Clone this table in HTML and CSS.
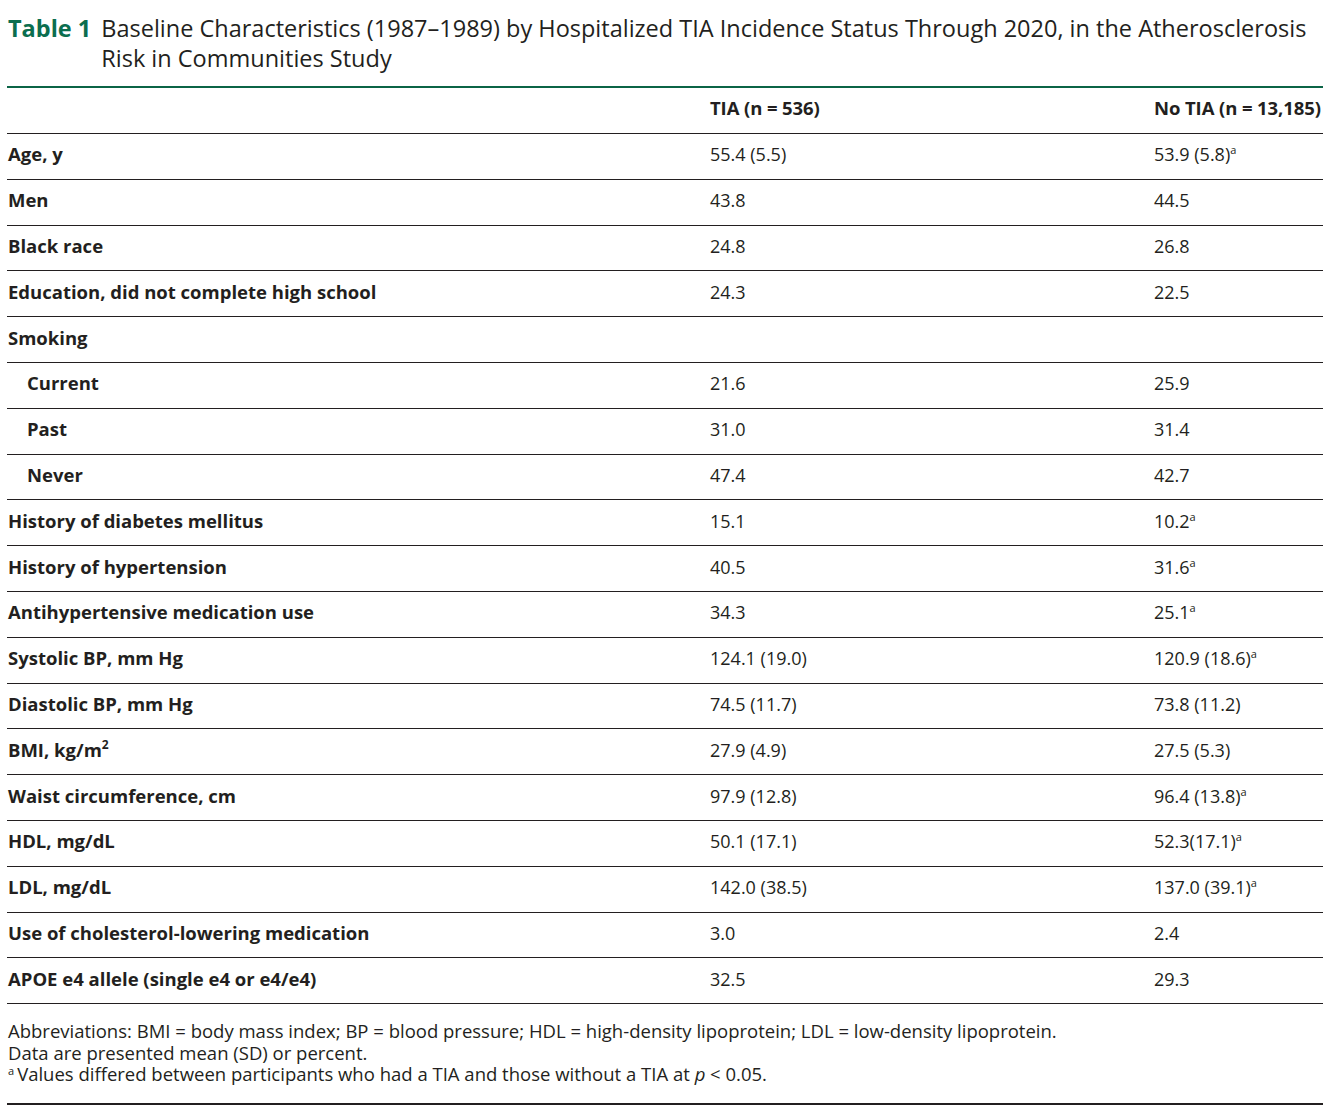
FILE: index.html
```html
<!DOCTYPE html>
<html>
<head>
<meta charset="utf-8">
<link rel="stylesheet" href="styles.css">
</head>
<body>
<div class="wrap">
  <div class="caption">
    <span class="label">Table 1</span>
    <span class="title">Baseline Characteristics (1987–1989) by Hospitalized TIA Incidence Status Through 2020, in the Atherosclerosis Risk in Communities Study</span>
  </div>
  <table class="data">
    <thead>
      <tr><th class="c1"></th><th class="c2">TIA (n = 536)</th><th class="c3">No TIA (n = 13,185)</th></tr>
    </thead>
    <tbody>
      <tr><td class="c1">Age, y</td><td class="c2">55.4 (5.5)</td><td class="c3">53.9 (5.8)<sup>a</sup></td></tr>
      <tr><td class="c1">Men</td><td class="c2">43.8</td><td class="c3">44.5</td></tr>
      <tr><td class="c1">Black race</td><td class="c2">24.8</td><td class="c3">26.8</td></tr>
      <tr><td class="c1">Education, did not complete high school</td><td class="c2">24.3</td><td class="c3">22.5</td></tr>
      <tr><td class="c1">Smoking</td><td class="c2"></td><td class="c3"></td></tr>
      <tr><td class="c1 ind">Current</td><td class="c2">21.6</td><td class="c3">25.9</td></tr>
      <tr><td class="c1 ind">Past</td><td class="c2">31.0</td><td class="c3">31.4</td></tr>
      <tr><td class="c1 ind">Never</td><td class="c2">47.4</td><td class="c3">42.7</td></tr>
      <tr><td class="c1">History of diabetes mellitus</td><td class="c2">15.1</td><td class="c3">10.2<sup>a</sup></td></tr>
      <tr><td class="c1">History of hypertension</td><td class="c2">40.5</td><td class="c3">31.6<sup>a</sup></td></tr>
      <tr><td class="c1">Antihypertensive medication use</td><td class="c2">34.3</td><td class="c3">25.1<sup>a</sup></td></tr>
      <tr><td class="c1">Systolic BP, mm Hg</td><td class="c2">124.1 (19.0)</td><td class="c3">120.9 (18.6)<sup>a</sup></td></tr>
      <tr><td class="c1">Diastolic BP, mm Hg</td><td class="c2">74.5 (11.7)</td><td class="c3">73.8 (11.2)</td></tr>
      <tr><td class="c1">BMI, kg/m<sup class="sq">2</sup></td><td class="c2">27.9 (4.9)</td><td class="c3">27.5 (5.3)</td></tr>
      <tr><td class="c1">Waist circumference, cm</td><td class="c2">97.9 (12.8)</td><td class="c3">96.4 (13.8)<sup>a</sup></td></tr>
      <tr><td class="c1">HDL, mg/dL</td><td class="c2">50.1 (17.1)</td><td class="c3">52.3(17.1)<sup>a</sup></td></tr>
      <tr><td class="c1">LDL, mg/dL</td><td class="c2">142.0 (38.5)</td><td class="c3">137.0 (39.1)<sup>a</sup></td></tr>
      <tr><td class="c1">Use of cholesterol-lowering medication</td><td class="c2">3.0</td><td class="c3">2.4</td></tr>
      <tr><td class="c1">APOE e4 allele (single e4 or e4/e4)</td><td class="c2">32.5</td><td class="c3">29.3</td></tr>
    </tbody>
  </table>
  <div class="notes">
    <p>Abbreviations: BMI = body mass index; BP = blood pressure; HDL = high-density lipoprotein; LDL = low-density lipoprotein.</p>
    <p>Data are presented mean (SD) or percent.</p>
    <p><sup class="fn">a</sup>Values differed between participants who had a TIA and those without a TIA at <i>p</i> &lt; 0.05.</p>
  </div>
</div>
</body>
</html>
```
FILE: styles.css
```css
html, body {
  margin: 0;
  padding: 0;
  background: #ffffff;
}
body {
  font-family: "Open Sans", "Noto Sans", sans-serif;
  color: #231f20;
}
.wrap {
  width: 1316px;
  margin-left: 7px;
  padding-top: 13px;
}
.caption {
  display: flex;
  gap: 10px;
  font-size: 23.5px;
  line-height: 30px;
  padding-bottom: 13px;
  border-bottom: 2px solid #0b6446;
}
.caption .label {
  color: #0b6e4f;
  font-weight: 700;
  white-space: nowrap;
  padding-left: 1px;
}
.caption .title {
  color: #231f20;
}
.data {
  width: 100%;
  table-layout: fixed;
  border-collapse: collapse;
  font-size: 18px;
}
.data th, .data td {
  text-align: left;
  padding: 0 0 4px 0;
  height: 40.8px;
  border-bottom: 1px solid #231f20;
  vertical-align: middle;
  line-height: 24px;
}
.data th {
  font-weight: 700;
  font-size: 18.5px;
  letter-spacing: -0.1px;
  padding-bottom: 6px;
  height: 39px;
  white-space: nowrap;
}
.data .c1 {
  width: 702px;
  font-weight: 700;
  font-size: 18.5px;
  padding-left: 1px;
}
.data .c1.ind {
  padding-left: 20px;
}
.data .c2 {
  width: 444px;
}
.data td.c2, .data td.c3 {
  font-weight: 400;
}
.data .c3 {
  white-space: nowrap;
}
.data sup {
  font-size: 11px;
  line-height: 0;
  vertical-align: 7px;
}
.data sup.sq {
  font-size: 12px;
  vertical-align: 8px;
}
.notes {
  padding-top: 16px;
  padding-bottom: 18px;
  border-bottom: 2px solid #231f20;
  font-size: 18.5px;
  line-height: 21.5px;
  color: #231f20;
}
.notes p {
  margin: 0;
  padding-left: 1px;
}
.notes sup.fn {
  font-size: 11px;
  line-height: 0;
  vertical-align: 6px;
  margin-right: 3px;
}
```
